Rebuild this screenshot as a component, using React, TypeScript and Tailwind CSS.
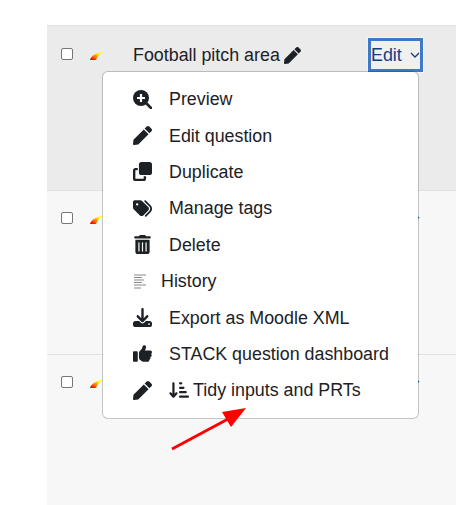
import React from 'react';
import { FaPen } from 'react-icons/fa';
import { FaArrowDownShortWide, FaClone, FaDownload, FaTags, FaThumbsUp, FaTrashCan } from 'react-icons/fa6';

const HistoryIcon = () => (
  <svg width="12" height="15" viewBox="0 0 12 15" className="text-[#8a8a8a]" stroke="currentColor" strokeWidth="1.2">
    <path d="M0 1h12M0 3.500h8M0 6h10M0 8.500h8M0 11h12M0 14h7" />
  </svg>
);

const PreviewIcon = () => (
  <svg width="19" height="19" viewBox="0 0 19 19">
    <circle cx="8" cy="8" r="8" fill="currentColor" />
    <path d="M8 4v8M4 8h8" stroke="#fff" strokeWidth="2.200" />
    <path d="M13 13l5 5" stroke="currentColor" strokeWidth="2.600" strokeLinecap="round" />
  </svg>
);

const ChevronIcon = () => (
  <svg width="10" height="6" viewBox="0 0 10 6" fill="none" stroke="currentColor" strokeWidth="1.300">
    <path d="M1 1l4 4 4-4" />
  </svg>
);

const SwooshIcon = ({ id }: { id: string }) => (
  <svg width="14" height="9" viewBox="0 0 14 9" className="shrink-0">
    <defs>
      <linearGradient id={id} x1="0" y1="1" x2="1" y2="0">
        <stop offset="0.1" stopColor="#f00" />
        <stop offset="0.4" stopColor="#f80" />
        <stop offset="0.7" stopColor="#ff0" />
      </linearGradient>
    </defs>
    <path d="M0 9C1 5 6 1.500 14 0.500C10 2.500 7.500 5 6 9Z" fill={`url(#${id})`} />
  </svg>
);

const menuItems = [
  { label: 'Preview', icon: <PreviewIcon /> },
  { label: 'Edit question', icon: <FaPen size={19} /> },
  { label: 'Duplicate', icon: <FaClone size={19} /> },
  { label: 'Manage tags', icon: <FaTags size={19} /> },
  { label: 'Delete', icon: <FaTrashCan size={19} /> },
];

const menuItemsAfter = [
  { label: 'Export as Moodle XML', icon: <FaDownload size={19} /> },
  { label: 'STACK question dashboard', icon: <FaThumbsUp size={19} /> },
];

const Row = ({ id, title, active }: { id: string; title?: string; active?: boolean }) => (
  <div
    className={
      active
        ? 'flex h-[166px] items-start border-t border-b border-[#dee2e6] bg-[#ebebeb] pt-[12px] pl-[14px]'
        : 'flex h-[164px] items-start border-b border-[#dee2e6] bg-[#f7f7f7] pt-[11px] pl-[14px]'
    }
  >
    <div className="mt-[10px] h-[12px] w-[12px] shrink-0 rounded-[2px] border border-[#767676] bg-white" />
    <div className="mt-[13px] ml-[17px] shrink-0">
      <SwooshIcon id={id} />
    </div>
    <div className="ml-[29px] flex w-[235px] shrink-0 items-center gap-[4px] pt-[3px] text-[#1d2125]">
      {title && (
        <>
          <span>{title}</span>
          <FaPen size={17} />
        </>
      )}
    </div>
    <div
      className={
        active
          ? 'flex h-[34px] w-[55px] shrink-0 items-center border-[3px] border-[#3f78c5] bg-[#f0f0f0] text-[#0f3f85] shadow-[0_0_0_1px_#f4f4f4]'
          : 'flex h-[34px] w-[55px] shrink-0 items-center border-[3px] border-transparent text-[#0f6cbf]'
      }
    >
      <span>Edit</span>
      <span className="ml-[8px]">
        <ChevronIcon />
      </span>
    </div>
  </div>
);

export default function App() {
  return (
    <div className="relative h-[505px] w-[456px] overflow-hidden bg-white font-['Liberation_Sans',sans-serif] text-[17.850px] leading-[28px]">
      <div className="pt-[25px] pl-[47px]">
        <Row id="swoosh-1" title="Football pitch area" active />
        <Row id="swoosh-2" />
        <Row id="swoosh-3" />
      </div>

      {/* Action menu */}
      <div className="absolute top-[71px] left-[102px] flex h-[348px] w-[317px] flex-col rounded-[6px] border border-[rgba(0,0,0,0.2)] bg-white bg-clip-padding pt-[9px] pl-[29px] text-[#1d2125]">
        {menuItems.map((item) => (
          <div key={item.label} className="flex h-[36.400px] shrink-0 items-center gap-[17px]">
            <span className="flex w-[20px] justify-center">{item.icon}</span>
            <span>{item.label}</span>
          </div>
        ))}
        <div className="flex h-[36.400px] shrink-0 items-center gap-[15px] pl-[2px]">
          <HistoryIcon />
          <span>History</span>
        </div>
        {menuItemsAfter.map((item) => (
          <div key={item.label} className="flex h-[36.400px] shrink-0 items-center gap-[17px]">
            <span className="flex w-[20px] justify-center">{item.icon}</span>
            <span>{item.label}</span>
          </div>
        ))}
        <div className="flex h-[36.400px] shrink-0 items-center gap-[17px]">
          <span className="flex w-[20px] justify-center">
            <FaPen size={19} />
          </span>
          <span className="flex items-center gap-[4px]">
            <FaArrowDownShortWide size={20} />
            Tidy inputs and PRTs
          </span>
        </div>
      </div>

      {/* Annotation arrow */}
      <svg className="absolute top-[400px] left-[165px]" width="90" height="55" viewBox="0 0 90 55">
        <path d="M7 49L63 19" stroke="#f00" strokeWidth="2.800" />
        <path d="M81 8L57 12L66 27Z" fill="#f00" />
      </svg>
    </div>
  );
}
